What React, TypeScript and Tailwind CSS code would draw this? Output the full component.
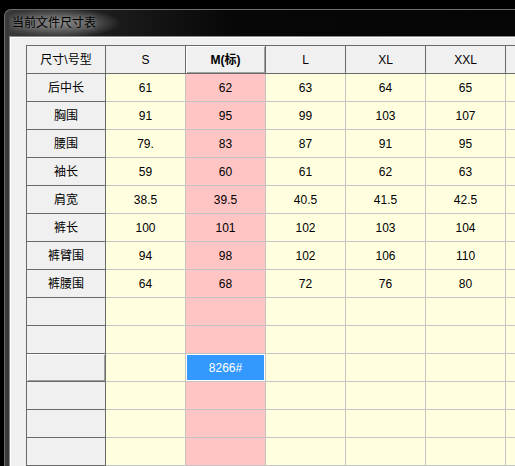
const FONT = { fontFamily: '"Liberation Sans", "Noto Sans CJK SC", sans-serif' };

const SIZES = ['S', 'M(标)', 'L', 'XL', 'XXL', ''];

const ROWS: { label: string; values: string[] }[] = [
  { label: '后中长', values: ['61', '62', '63', '64', '65'] },
  { label: '胸围', values: ['91', '95', '99', '103', '107'] },
  { label: '腰围', values: ['79.', '83', '87', '91', '95'] },
  { label: '袖长', values: ['59', '60', '61', '62', '63'] },
  { label: '肩宽', values: ['38.5', '39.5', '40.5', '41.5', '42.5'] },
  { label: '裤长', values: ['100', '101', '102', '103', '104'] },
  { label: '裤臂围', values: ['94', '98', '102', '106', '110'] },
  { label: '裤腰围', values: ['64', '68', '72', '76', '80'] },
  { label: '', values: [] },
  { label: '', values: [] },
  { label: '', values: [] },
  { label: '', values: [] },
  { label: '', values: [] },
  { label: '', values: [] },
];

const SELECTED_ROW = 10;
const STD_COL = 1;

function HeaderCell({ children, raised }: { children?: React.ReactNode; raised?: boolean }) {
  return (
    <div
      className={
        'flex h-[28px] items-center justify-center border-r border-b border-[#6a6a6a] bg-[#f0f0f0] text-[12px] text-black ' +
        (raised ? 'shadow-[inset_1px_1px_0_#ffffff,inset_-1px_-1px_0_#a0a0a0]' : '')
      }
    >
      {children}
    </div>
  );
}

export default function App() {
  return (
    <div className="h-[466px] w-[515px] overflow-hidden bg-black pt-[9px] pl-[4px]" style={FONT}>
      <div className="flex h-full flex-col rounded-tl-[7px] border-t border-l border-[#6e6e6e] bg-[linear-gradient(to_right,#3a3a3a,#1c1c1c_20%,#070707_45%,#050505)] pl-[4px]">
        <div className="flex h-[26px] shrink-0 items-center bg-[radial-gradient(ellipse_62px_15px_at_50px_13px,rgba(135,135,135,0.95)_0%,rgba(110,110,110,0.7)_55%,rgba(60,60,60,0)_100%)] pl-[3px]">
          <span className="text-[12px] text-black [text-shadow:0_0_4px_rgba(200,200,200,0.5)]">当前文件尺寸表</span>
        </div>
        <div className="flex-1 overflow-hidden border-t border-l border-[#8a8a8a] bg-[#f0f0f0] pt-[8px] pl-[16px] shadow-[inset_1px_1px_0_#ffffff]">
          <div className="grid w-max grid-cols-[79px_repeat(6,80px)] border-t border-l border-[#6a6a6a]">
            <HeaderCell>尺寸\号型</HeaderCell>
            {SIZES.map((s, i) => (
              <HeaderCell key={i} raised={i === STD_COL}>
                {i === STD_COL ? <span className="font-bold">{s}</span> : s}
              </HeaderCell>
            ))}
            {ROWS.map((row, r) => (
              <div key={r} className="contents">
                <HeaderCell raised={r === SELECTED_ROW}>{row.label}</HeaderCell>
                {SIZES.map((_, c) => {
                  const selected = r === SELECTED_ROW && c === STD_COL;
                  const bg = selected
                    ? 'bg-[#3399ff] text-white shadow-[inset_0_0_0_1px_#ffffff]'
                    : c === STD_COL
                      ? 'bg-[#ffc4c4] text-black'
                      : 'bg-[#ffffe0] text-black';
                  return (
                    <div
                      key={c}
                      className={
                        'flex h-[28px] items-center justify-center border-r border-b border-[#c4c4c4] text-[12px] ' + bg
                      }
                    >
                      {selected ? '8266#' : (row.values[c] ?? '')}
                    </div>
                  );
                })}
              </div>
            ))}
          </div>
        </div>
      </div>
    </div>
  );
}
